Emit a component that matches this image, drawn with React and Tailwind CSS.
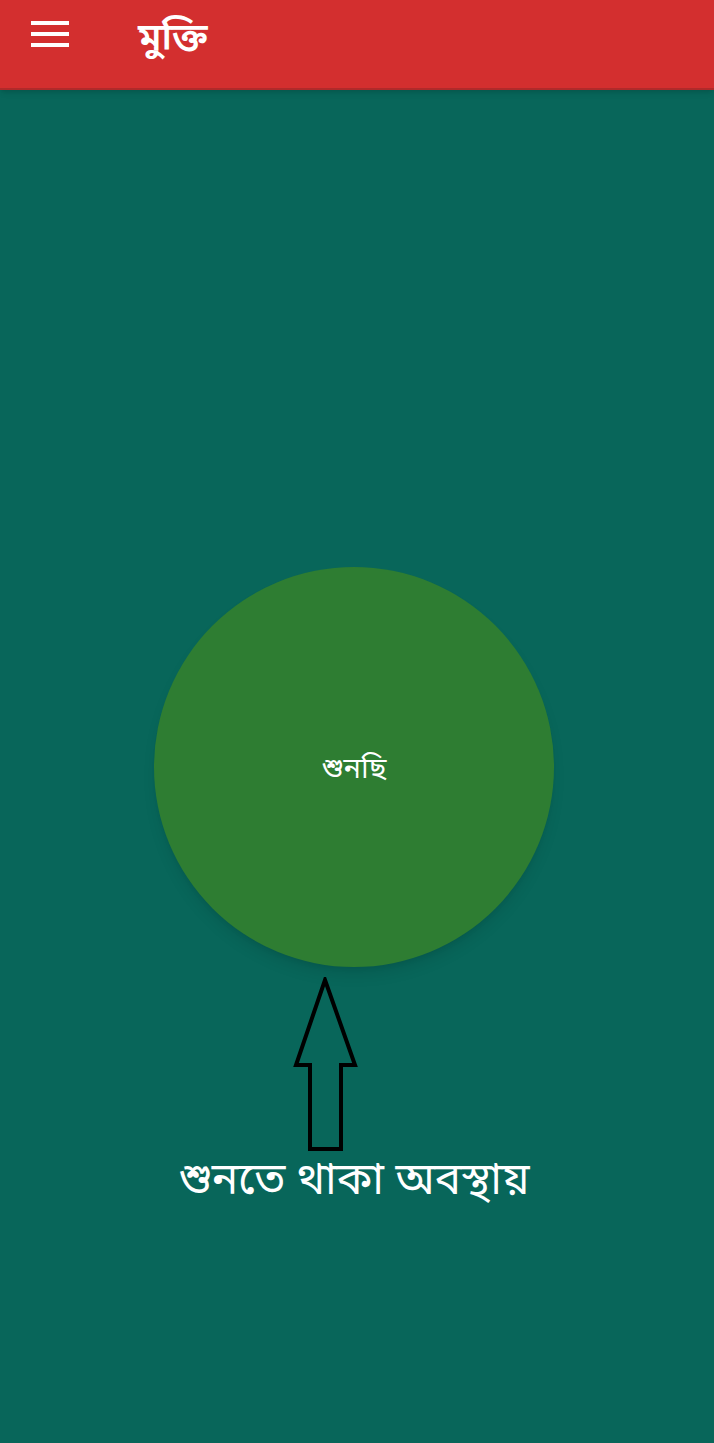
import React from "react";

const bn = { fontFamily: '"Noto Sans Bengali", "Noto Serif Bengali", "Lohit Bengali", "Noto Sans", sans-serif' };

function Arrow() {
  return (
    <svg width="66" height="176" viewBox="0 0 66 176" className="ml-[-56px]">
      <path
        d="M32 3 L62 88 L48 88 L48 172 L17 172 L17 88 L3 88 Z"
        fill="none"
        stroke="#000"
        strokeWidth="4"
        strokeLinejoin="miter"
      />
    </svg>
  );
}

export default function App() {
  return (
    <div className="min-h-[1443px] w-full bg-[#08665a] flex flex-col" style={bn}>
      {/* Toolbar */}
      <header className="h-[90px] bg-[#d32f2f] border-b-2 border-[#b02a2a] flex items-center shadow-md">
        <button className="ml-[31px] w-[38px] flex flex-col gap-[7px] mt-[-20px]">
          <span className="block h-[4px] w-full bg-white" />
          <span className="block h-[4px] w-full bg-white" />
          <span className="block h-[4px] w-full bg-white" />
        </button>
        <h1 className="ml-[69px] mt-[-6px] text-[38px] font-semibold text-white leading-none">মুক্তি</h1>
      </header>

      <main className="flex flex-col items-center pt-[477px] pr-[6px]">
        <div className="w-[400px] h-[400px] rounded-full bg-[#2e7d32] shadow-lg flex items-center justify-center">
          <span className="text-[29px] text-white leading-none mt-[6px]">শুনছি</span>
        </div>
        <div className="mt-[10px] flex">
          <Arrow />
        </div>
        <p className="mt-[3px] text-[44px] text-white leading-tight">শুনতে থাকা অবস্থায়</p>
      </main>
    </div>
  );
}
